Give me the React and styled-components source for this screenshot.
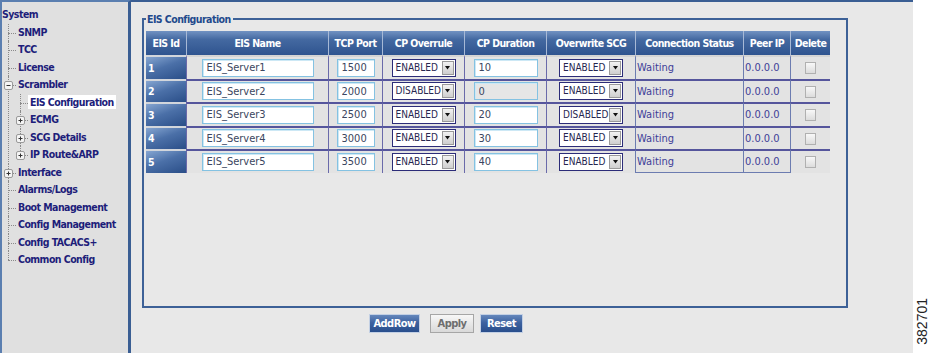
import React from 'react';
import styled, { createGlobalStyle, css } from 'styled-components';

const Global = createGlobalStyle`
  html, body { margin: 0; padding: 0; background: #ffffff; }
  body { font-family: "DejaVu Sans Condensed", "DejaVu Sans", sans-serif; }
`;

const boldText = css`
  font-family: "DejaVu Sans Condensed", "DejaVu Sans", sans-serif;
  font-weight: bold;
  font-size: 10.5px;
  letter-spacing: -0.55px;
`;

const Page = styled.div`
  display: flex;
  width: 931px;
  height: 353px;
  overflow: hidden;
`;

/* ---------- Sidebar tree ---------- */
const Sidebar = styled.nav`
  box-sizing: border-box;
  width: 131px;
  flex: none;
  height: 100%;
  background: #e0e0e0;
  border-left: 2px solid #5b7fb0;
  border-top: 2px solid #5b7fb0;
  border-right: 3px solid #3a5e93;
  padding-top: 4px;
  ${boldText};
  color: #1d1d7a;
`;

const RootLabel = styled.div`
  height: 17.5px;
  line-height: 17.5px;
`;

const Group = styled.div`
  margin-left: ${p => p.$indent}px;
`;

const Branch = styled.div`
  position: relative;
  padding-left: 10px;
  &::before {
    content: '';
    position: absolute;
    left: 0;
    top: 0;
    ${p => (p.$last ? 'height: 9px;' : 'bottom: 0;')}
    border-left: 1px dotted #8a8a8a;
  }
`;

const Label = styled.div`
  position: relative;
  height: 17.5px;
  line-height: 17.5px;
  white-space: nowrap;
  &::before {
    content: '';
    position: absolute;
    left: -10px;
    top: 9px;
    width: 8px;
    border-top: 1px dotted #8a8a8a;
  }
`;

const LabelText = styled.span`
  display: inline-block;
  line-height: 14px;
  padding: 0 2px;
  margin-left: -2px;
  background: ${p => (p.$selected ? '#ffffff' : 'transparent')};
`;

const Toggle = styled.svg`
  position: absolute;
  left: -14px;
  top: 5px;
  width: 9px;
  height: 9px;
`;

function ToggleIcon({ open }) {
  return (
    <Toggle viewBox="0 0 9 9">
      <rect x="0.5" y="0.5" width="8" height="8" rx="1.5" fill="#f4f4f4" stroke="#9a9a9a" />
      <path d="M2.5 4.5h4" stroke="#333" strokeWidth="1" />
      {!open && <path d="M4.5 2.5v4" stroke="#333" strokeWidth="1" />}
    </Toggle>
  );
}

function TreeItem({ label, last, toggle, selected, children }) {
  return (
    <Branch $last={last}>
      <Label>
        {toggle && <ToggleIcon open={toggle === 'open'} />}
        <LabelText $selected={selected}>{label}</LabelText>
      </Label>
      {children}
    </Branch>
  );
}

/* ---------- Main ---------- */
const Main = styled.main`
  box-sizing: border-box;
  width: 782px;
  flex: none;
  height: 100%;
  background: #e8e8e8;
  border-top: 2px solid #3a5e93;
  padding: 10px 0 0 11px;
`;

const Fieldset = styled.fieldset`
  box-sizing: border-box;
  width: 706px;
  height: 296px;
  margin: 0;
  padding: 5px 2px 0 2px;
  border: 2px solid #3d6197;
  min-inline-size: 0;
`;

const Legend = styled.legend`
  padding: 0 2px 0 1px;
  ${boldText};
  line-height: 14px;
  color: #1f4a8c;
`;

const Table = styled.table`
  border-collapse: separate;
  border-spacing: 0;
  table-layout: fixed;
  width: 684px;
`;

const Th = styled.th`
  height: 24px;
  padding: 0;
  background: linear-gradient(#7192c2 0%, #4469a1 35%, #2f548f 100%);
  color: #ffffff;
  ${boldText};
  text-align: center;
  border-left: ${p => (p.$first ? 'none' : '1px solid #a7b9d6')};
  white-space: nowrap;
`;

const IdCell = styled.td`
  box-sizing: border-box;
  height: 23.5px;
  padding: 0 0 0 2px;
  background: linear-gradient(160deg, #86a6d2 0%, #4b70a8 45%, #2a4e88 100%);
  color: #ffffff;
  ${boldText};
  border-top: 2px solid #d2d6dc;
`;

const Td = styled.td`
  box-sizing: border-box;
  height: 23.5px;
  padding: ${p => (p.$align === 'left' ? '0 0 0 1px' : '0')};
  background: #e3e3e3;
  text-align: ${p => p.$align || 'center'};
  border-left: 1px solid ${p => (p.$boxed ? '#6c7cb0' : '#6a6aaa')};
  border-top: 2px solid ${p => (p.$first ? '#d4d4d4' : '#55559c')};
  border-bottom: ${p => (p.$lastRow && p.$boxed ? '1px solid #6c7cb0' : 'none')};
  font-size: 11px;
  color: #3e3e98;
  white-space: nowrap;
`;

const TextBox = styled.input`
  box-sizing: border-box;
  width: ${p => p.$w}px;
  height: 18px;
  margin: 0;
  padding: 0 4px;
  border: 1px solid #84c2e2;
  box-shadow: inset 1px 1px 0 #cde8f5;
  background: ${p => (p.$dim ? '#e6e6e6' : '#ffffff')};
  font-family: "DejaVu Sans Condensed", "DejaVu Sans", sans-serif;
  font-size: 11px;
  color: #3b4660;
  outline: none;
  vertical-align: middle;
`;

const SelectBox = styled.div`
  box-sizing: border-box;
  display: inline-flex;
  align-items: stretch;
  width: 64px;
  height: 18px;
  border: 1px solid #2c2c78;
  background: #ffffff;
  vertical-align: middle;
  text-align: left;
`;

const SelectText = styled.span`
  flex: 1;
  padding-left: 3px;
  font-size: 10px;
  line-height: 16px;
  color: #26264f;
`;

const SelectButton = styled.span`
  box-sizing: border-box;
  width: 12px;
  margin: 1px 1px 1px 0;
  display: flex;
  align-items: center;
  justify-content: center;
  background: linear-gradient(#f2f2f2, #cfcfcf);
  border: 1px solid #9a9a9a;
`;

function Select({ value }) {
  return (
    <SelectBox role="combobox" aria-label={value}>
      <SelectText>{value}</SelectText>
      <SelectButton>
        <svg width="5" height="4" viewBox="0 0 5 4">
          <path d="M0 0h5L2.5 3.5z" fill="#111" />
        </svg>
      </SelectButton>
    </SelectBox>
  );
}

const Check = styled.span`
  display: inline-block;
  box-sizing: border-box;
  width: 11px;
  height: 12px;
  border: 1px solid #b0b0b0;
  background: linear-gradient(#f8f8f8, #dcdcdc);
  vertical-align: middle;
`;

const ButtonRow = styled.div`
  display: flex;
  gap: 6px;
  margin-top: 6px;
  padding-left: 227px;
`;

const Button = styled.button`
  box-sizing: border-box;
  width: ${p => p.$w}px;
  height: 19px;
  margin: 0 ${p => p.$mr || 0}px 0 0;
  padding: 0;
  ${boldText};
  font-size: 11px;
  color: ${p => (p.$gray ? '#6e6e6e' : '#ffffff')};
  background: ${p =>
    p.$gray ? 'linear-gradient(#f7f7f7, #d9d9d9)' : 'linear-gradient(#6487bc 0%, #3d62a0 45%, #294e8c 100%)'};
  border: 1px solid ${p => (p.$gray ? '#a6a6a6' : '#c3d0e4')};
  border-radius: 0;
`;

const Strip = styled.aside`
  box-sizing: border-box;
  width: 18px;
  flex: none;
  display: flex;
  align-items: flex-end;
  justify-content: center;
  padding-bottom: 8px;
  background: #ffffff;
`;

const FigNum = styled.span`
  writing-mode: vertical-rl;
  transform: rotate(180deg);
  font-family: "Liberation Sans", Arial, sans-serif;
  font-size: 14px;
  line-height: 14px;
  color: #222222;
`;

const columns = [
  ['EIS Id', 40],
  ['EIS Name', 142],
  ['TCP Port', 54],
  ['CP Overrule', 82],
  ['CP Duration', 82],
  ['Overwrite SCG', 89],
  ['Connection Status', 108],
  ['Peer IP', 47],
  ['Delete', 40],
];

const rows = [
  { id: 1, name: 'EIS_Server1', port: '1500', over: 'ENABLED', dur: '10', scg: 'ENABLED' },
  { id: 2, name: 'EIS_Server2', port: '2000', over: 'DISABLED', dur: '0', scg: 'ENABLED', dim: true },
  { id: 3, name: 'EIS_Server3', port: '2500', over: 'ENABLED', dur: '20', scg: 'DISABLED' },
  { id: 4, name: 'EIS_Server4', port: '3000', over: 'ENABLED', dur: '30', scg: 'ENABLED' },
  { id: 5, name: 'EIS_Server5', port: '3500', over: 'ENABLED', dur: '40', scg: 'ENABLED' },
];

export default function App() {
  return (
    <>
      <Global />
      <Page>
        <Sidebar>
          <RootLabel>System</RootLabel>
          <Group $indent={6}>
            <TreeItem label="SNMP" />
            <TreeItem label="TCC" />
            <TreeItem label="License" />
            <TreeItem label="Scrambler" toggle="open">
              <Group $indent={2}>
                <TreeItem label="EIS Configuration" selected />
                <TreeItem label="ECMG" toggle="closed" />
                <TreeItem label="SCG Details" toggle="closed" />
                <TreeItem label="IP Route&ARP" toggle="closed" last />
              </Group>
            </TreeItem>
            <TreeItem label="Interface" toggle="closed" />
            <TreeItem label="Alarms/Logs" />
            <TreeItem label="Boot Management" />
            <TreeItem label="Config Management" />
            <TreeItem label="Config TACACS+" />
            <TreeItem label="Common Config" last />
          </Group>
        </Sidebar>

        <Main>
          <Fieldset>
            <Legend>EIS Configuration</Legend>
            <Table>
              <colgroup>
                {columns.map(([n, w]) => (
                  <col key={n} style={{ width: w }} />
                ))}
              </colgroup>
              <thead>
                <tr>
                  {columns.map(([n], i) => (
                    <Th key={n} $first={i === 0}>{n}</Th>
                  ))}
                </tr>
              </thead>
              <tbody>
                {rows.map((r, i) => {
                  const first = i === 0;
                  const lastRow = i === rows.length - 1;
                  return (
                    <tr key={r.id}>
                      <IdCell>{r.id}</IdCell>
                      <Td $first={first}>
                        <TextBox $w={112} readOnly value={r.name} />
                      </Td>
                      <Td $first={first}>
                        <TextBox $w={38} readOnly value={r.port} />
                      </Td>
                      <Td $first={first}>
                        <Select value={r.over} />
                      </Td>
                      <Td $first={first}>
                        <TextBox $w={64} $dim={r.dim} readOnly value={r.dur} />
                      </Td>
                      <Td $first={first}>
                        <Select value={r.scg} />
                      </Td>
                      <Td $first={first} $align="left" $boxed $lastRow={lastRow}>Waiting</Td>
                      <Td $first={first} $align="left" $boxed $lastRow={lastRow}>0.0.0.0</Td>
                      <Td $first={first} $boxed>
                        <Check role="checkbox" aria-checked="false" />
                      </Td>
                    </tr>
                  );
                })}
              </tbody>
            </Table>
          </Fieldset>
          <ButtonRow>
            <Button $w={51} $mr={4}>AddRow</Button>
            <Button $w={44} $gray>Apply</Button>
            <Button $w={43}>Reset</Button>
          </ButtonRow>
        </Main>

        <Strip>
          <FigNum>382701</FigNum>
        </Strip>
      </Page>
    </>
  );
}
